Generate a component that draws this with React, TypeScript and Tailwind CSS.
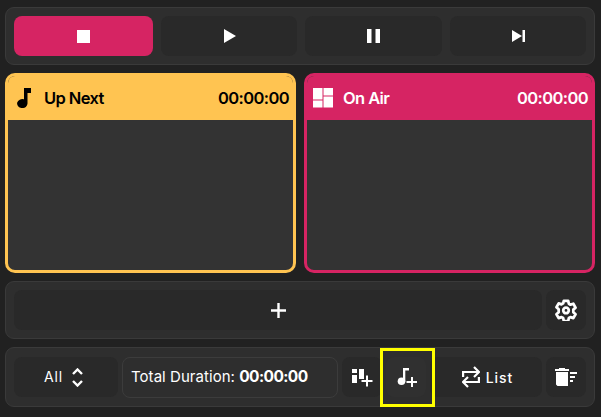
import React from "react";

const Btn = ({ className = "", children }: { className?: string; children?: React.ReactNode }) => (
  <div className={`flex h-10 items-center justify-center rounded-lg bg-[#292929] text-white ${className}`}>{children}</div>
);

const Panel = ({ className = "", children }: { className?: string; children: React.ReactNode }) => (
  <div className={`flex items-center rounded-[9px] border border-[#3a3a3a] bg-[#2e2e2e] px-2 ${className}`}>{children}</div>
);

const Card = ({ className, head, text, icon, title }: { className: string; head: string; text: string; icon: React.ReactNode; title: string }) => (
  <div className={`flex h-[200px] w-[291px] min-w-0 flex-col overflow-hidden rounded-[10px] border-[3px] bg-[#333333] ${className}`}>
    <div className={`flex h-11 shrink-0 items-center justify-between pr-[4px] text-[16.500px] font-semibold tracking-[-0.6px] ${text} ${head}`}>
      <div className="flex items-center">
        {icon}
        <span>{title}</span>
      </div>
      <span>00:00:00</span>
    </div>
  </div>
);

export default function App() {
  return (
    <div className="relative flex h-[417px] w-[601px] flex-col bg-[#212121] pl-[5px] pr-[6px] pt-[7px] font-['Inter',sans-serif] text-white">
      <Panel className="h-[58px] gap-2">
        <Btn className="w-[139px] bg-[#d62463]">
          <svg width="13" height="13" viewBox="0 0 13 13"><rect width="13" height="13" fill="#fff" /></svg>
        </Btn>
        <Btn className="w-[136px]">
          <svg className="ml-[2px]" width="12" height="14" viewBox="0 0 12 14"><path d="M0 0 12 7 0 14Z" fill="#fff" /></svg>
        </Btn>
        <Btn className="w-[137px]">
          <svg width="13" height="14" viewBox="0 0 13 14"><path d="M0 0h4.500v14H0zM8.500 0H13v14H8.500z" fill="#fff" /></svg>
        </Btn>
        <Btn className="w-[136px]">
          <svg width="13" height="12" viewBox="0 0 13 12"><path d="M0 0 10 6 0 12ZM10.500 0H13v12h-2.500z" fill="#fff" /></svg>
        </Btn>
      </Panel>

      <div className="mt-[8px] flex gap-2">
        <Card
          className="border-[#ffc451]"
          head="bg-[#ffc451]"
          text="text-black"
          title="Up Next"
          icon={
            <svg className="ml-[9px] mr-[13px]" width="14" height="20" viewBox="0 0 14 20">
              <path d="M7 0h7v5H10.500v10.500a5.200 4.500 0 1 1-3.500-4.200z" fill="#000" />
            </svg>
          }
        />
        <Card
          className="border-[#d62463]"
          head="bg-[#d62463]"
          text="text-white"
          title="On Air"
          icon={
            <svg className="ml-[6px] mr-[10px]" width="20" height="20" viewBox="0 0 20 20">
              <path d="M0 0h9.500v11.500H0zM10.500 0H20v7.500h-9.500zM0 12.500h9.500V19.500H0zM10.500 8.500H20V19.500h-9.500z" fill="#fff" />
            </svg>
          }
        />
      </div>

      <Panel className="mt-[8px] h-[58px] gap-1">
        <Btn className="min-w-0 flex-1">
          <svg width="15" height="15" viewBox="0 0 15 15"><path d="M6.300 0h2.400v6.300H15v2.400H8.700V15H6.300V8.700H0V6.300h6.300z" fill="#fff" /></svg>
        </Btn>
        <Btn className="w-10">
          <svg width="22" height="22" viewBox="0 0 24 24" fill="none" stroke="#fff" strokeWidth="3" strokeLinejoin="round">
            <path d="M9.600 2h4.800l.7 3.200 1.800 1 3.100-1 2.400 4.200-2.400 2.200v2.800l2.400 2.200-2.400 4.200-3.100-1-1.800 1-.7 3.200H9.600l-.7-3.200-1.800-1-3.100 1-2.400-4.200 2.400-2.200V11.200L1.600 9 4 4.800l3.100 1 1.800-1z" />
            <circle cx="12" cy="12.500" r="3" />
          </svg>
        </Btn>
      </Panel>

      <Panel className="mt-[8px] h-[60px] gap-1">
        <Btn className="w-[104px] gap-[9px] pr-[5px] text-sm font-normal tracking-[0.8px]">
          <span>All</span>
          <svg width="11" height="19" viewBox="0 0 11 19" fill="none" stroke="#fff" strokeWidth="2.400">
            <path d="M1 6 5.500 1.500 10 6M1 13l4.500 4.500L10 13" />
          </svg>
        </Btn>
        <div className="flex h-[41px] w-[216px] items-center whitespace-nowrap rounded-lg border border-[#3c3c3c] pl-[8px] text-[15px]">
          <span className="tracking-[0.05px]">Total Duration:&nbsp;</span>
          <span className="text-[15.500px] font-bold tracking-[-0.6px]">00:00:00</span>
        </div>
        <Btn className="w-10">
          <svg width="22" height="20" viewBox="0 0 22 20" fill="#fff">
            <path d="M1 2h5v4H1zM1 8h5v8H1zM8 2h5v10H8z" />
            <path d="M15 8.500h2V13h4.500v2H17v4.500h-2V15h-4.500v-2H15z" />
          </svg>
        </Btn>
        <Btn className="w-10 bg-[#303030]">
          <svg width="21" height="19" viewBox="0 0 21 19" fill="#fff">
            <circle cx="5.500" cy="13.200" r="3.800" />
            <path d="M7 0h6v2.500H9.300V13.500H7z" />
            <path d="M15 9h2v4h4v2h-4v4h-2v-4h-4.500v-2H15z" />
          </svg>
        </Btn>
        <Btn className="min-w-0 flex-1 gap-[6px] pl-[3px] text-[14px] font-medium tracking-[1px]">
          <svg width="18" height="22" viewBox="0 0 18 22" fill="none" stroke="#fff" strokeWidth="2.200">
            <path d="M1.100 11V6h14.500M12 1l5 5-5 5M16.900 11v5H2.400M6 11l-5 5 5 5" />
          </svg>
          <span>List</span>
        </Btn>
        <Btn className="w-10">
          <svg width="22" height="18" viewBox="0 0 22 18" fill="#fff">
            <path d="M4 0h6v1h4v2H0V1h4zM1 4h12v14H2.500L1 16.500z" />
            <path d="M15 4h7v2h-7zM15 8h5v2h-5zM15 12h3v2h-3z" />
          </svg>
        </Btn>
      </Panel>

      <div className="pointer-events-none absolute left-[380px] top-[348px] h-[59px] w-[55px] border-[3px] border-[#ffff00]" />
    </div>
  );
}
